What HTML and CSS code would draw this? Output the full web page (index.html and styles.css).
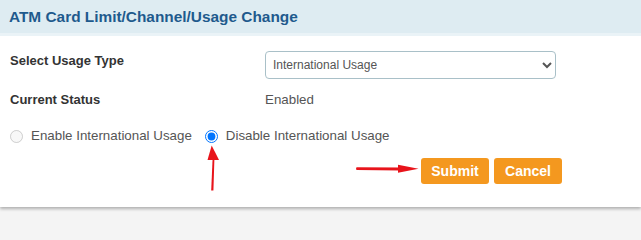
FILE: index.html
```html
<!DOCTYPE html>
<html>
<head>
<meta charset="utf-8">
<link rel="stylesheet" href="styles.css">
</head>
<body>
<div class="card">
  <div class="card-header"><h2 class="title">ATM Card Limit/Channel/Usage Change</h2></div>
  <div class="card-body">
    <div class="row row-select">
      <div class="label">Select Usage Type</div>
      <select class="usage-select"><option>International Usage</option></select>
    </div>
    <div class="row row-status">
      <div class="label">Current Status</div>
      <div class="value">Enabled</div>
    </div>
    <div class="radios">
      <label class="radio-opt"><input type="radio" name="usage" disabled><span>Enable International Usage</span></label>
      <label class="radio-opt"><input type="radio" name="usage" checked><span>Disable International Usage</span></label>
    </div>
    <div class="actions">
      <button class="btn">Submit</button>
      <button class="btn">Cancel</button>
    </div>
  </div>
  <svg class="annotations" width="641" height="210" viewBox="0 0 641 210">
    <path d="M211.2 190.5 L212.6 158.5 L214.4 158.5 L213.4 190.5 Z" fill="#e8141b"/>
    <path d="M211.7 145.5 L207.5 160 L219 160 Z" fill="#e8141b"/>
    <path d="M356.5 167.2 L400 167.6 L400 170.4 L356.5 170 Q355.5 168.6 356.5 167.2 Z" fill="#e8141b"/>
    <path d="M418.5 168.8 L398 164.8 L398 172.8 Z" fill="#e8141b"/>
  </svg>
</div>
</body>
</html>
```
FILE: styles.css
```css
html, body {
  margin: 0;
  padding: 0;
}
body {
  background: #f4f4f4;
  font-family: "Liberation Sans", Arial, sans-serif;
  width: 641px;
  height: 236px;
  overflow: hidden;
}
.card {
  position: relative;
  background: #ffffff;
  box-shadow: 0 2px 3px rgba(0, 0, 0, 0.28);
  height: 207px;
}
.card-header {
  background: #deecf2;
  height: 33px;
  border-bottom: 3px solid #eaf3f7;
  padding-left: 9px;
}
.title {
  margin: 0;
  font-size: 15.4px;
  font-weight: bold;
  line-height: 34px;
  color: #1e5a8d;
}
.card-body {
  padding: 0 10px;
}
.row {
  display: grid;
  grid-template-columns: 255px 291px;
  align-items: start;
}
.row-select {
  margin-top: 15px;
  height: 28px;
}
.row-select .label {
  margin-top: 1px;
}
.row-status {
  margin-top: 12px;
}
.label {
  font-size: 13px;
  font-weight: bold;
  line-height: 18px;
  color: #333333;
}
.value {
  font-size: 13.33px;
  line-height: 18px;
  color: #555555;
}
.usage-select {
  width: 291px;
  height: 28px;
  font-family: "Liberation Sans", Arial, sans-serif;
  font-size: 12px;
  color: #555555;
  background: #ffffff;
  border: 1px solid #a9c0c8;
  border-radius: 4px;
  padding: 0 3px;
  margin: 0;
}
.radios {
  display: flex;
  gap: 13px;
  margin-top: 18px;
  height: 18px;
  align-items: center;
}
.radio-opt {
  display: flex;
  align-items: center;
  gap: 8px;
  font-size: 13.33px;
  line-height: 18px;
  color: #555555;
}
.radio-opt input {
  margin: 0;
  width: 13px;
  height: 13px;
}
.actions {
  display: flex;
  gap: 5px;
  margin-top: 13px;
  padding-left: 411px;
}
.btn {
  height: 26px;
  min-width: 68px;
  padding: 0 10px;
  border: none;
  border-radius: 3px;
  background: #f4981f;
  color: #ffffff;
  font-family: "Liberation Sans", Arial, sans-serif;
  font-size: 14px;
  font-weight: bold;
}
.annotations {
  position: absolute;
  left: 0;
  top: 0;
  pointer-events: none;
}
```
